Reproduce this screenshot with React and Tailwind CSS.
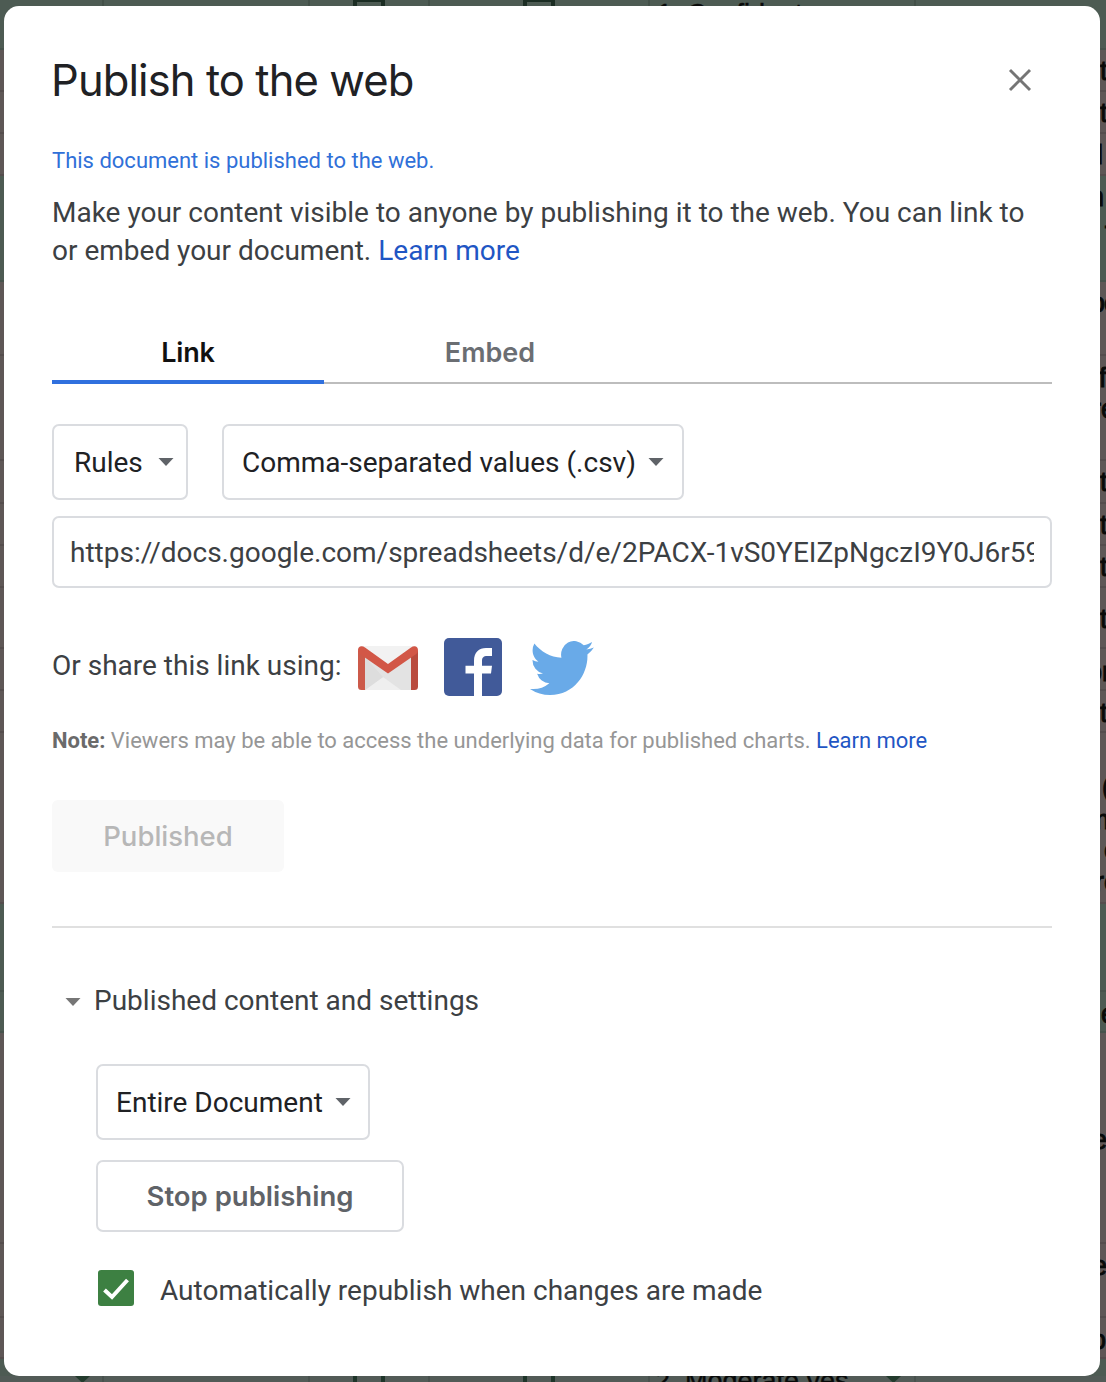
import React from "react";

const rows = [
  { h: 50, green: true },
  { h: 42, words: [["t", 30, 0]] },
  { h: 42, words: [["t", 30, 0]] },
  { h: 42, words: [["l", 30, -3]] },
  { h: 106, green: true, words: [["n", 30, -11], ["-", 58, 4]] },
  { h: 74, words: [["o", 30, -10], ["c", 30, 4]] },
  { h: 105, words: [["f", 31, -1], ["re", 62, -8]] },
  { h: 43, words: [["t", 30, 0]] },
  { h: 42, words: [["t", 30, 0]] },
  { h: 42, words: [["t", 30, 0]] },
  { h: 61, words: [["t", 40, 0]] },
  { h: 42, words: [["or", 32, -13]] },
  { h: 42, words: [["t", 31, 0]] },
  { h: 171, words: [["(", 63, 2], ["m", 96, -13], ["c", 126, 4], ["re", 158, -5]] },
  { h: 88, green: true },
  { h: 41, green: true, words: [["e", 31, 1]] },
  { h: 211, words: [["e", 116, -8]] },
  { h: 74, words: [["e", 31, -8]] },
  { h: 41, words: [["o", 31, -9]] },
  { h: 24, green: true },
];

function Backdrop() {
  return (
    <div className="absolute inset-0 flex flex-col overflow-hidden font-['Liberation_Sans',sans-serif] text-[27px] text-[#080a09]" aria-hidden="true">
      {rows.map((r, i) => (
        <div
          key={i}
          className={
            "flex shrink-0 justify-end border-b-2 " +
            (r.green ? "border-[#46534c] bg-[#4d5b53]" : "border-[#544d4d] bg-[#5e5756]")
          }
          style={{ height: r.h }}
        >
          <div className="relative w-1.5 overflow-hidden">
            {(r.words || []).map(([w, base, x], j) => (
              <span key={j} className="absolute leading-[30px] [-webkit-text-stroke:0.9px]" style={{ top: base - 24, left: x }}>
                {w}
              </span>
            ))}
          </div>
        </div>
      ))}
      <div className="absolute left-0 top-0 h-1.5 w-full overflow-hidden">
        <i className="absolute left-[102px] h-full w-0.5 bg-[#435048]" />
        <i className="absolute left-[308px] h-full w-0.5 bg-[#435048]" />
        <i className="absolute left-[353px] h-5 w-8 border-4 border-t-2 border-[#1b2d23]" />
        <i className="absolute left-[428px] h-full w-0.5 bg-[#435048]" />
        <i className="absolute left-[523px] h-5 w-8 border-4 border-t-2 border-[#1b2d23]" />
        <i className="absolute left-[648px] h-full w-0.5 bg-[#435048]" />
        <span className="absolute left-[657px] top-0 whitespace-pre leading-[28px] [-webkit-text-stroke:0.5px]">1. Confident</span>
        <i className="absolute left-[914px] h-full w-0.5 bg-[#435048]" />
      </div>
      <div className="absolute left-0 top-[1376px] h-1.5 w-full overflow-hidden bg-[#525b57]">
        <svg className="absolute left-[75px] top-0" width="15" height="6"><path d="M0 0h15L7.500 7z" fill="#233b2d" /></svg>
        <i className="absolute left-[102px] h-full w-0.5 bg-[#48514d]" />
        <i className="absolute left-[308px] h-full w-0.5 bg-[#48514d]" />
        <i className="absolute left-[353px] top-[-4px] h-5 w-8 border-4 border-[#1f3529]" />
        <i className="absolute left-[428px] h-full w-0.5 bg-[#48514d]" />
        <i className="absolute left-[523px] top-[-4px] h-5 w-8 border-4 border-[#1f3529]" />
        <i className="absolute left-[648px] h-full w-0.5 bg-[#48514d]" />
        <span className="absolute left-[655px] top-[-9px] whitespace-pre leading-[28px] [-webkit-text-stroke:0.4px]">2. Moderate yes</span>
        <svg className="absolute left-[886px] top-0" width="15" height="6"><path d="M0 0h15L7.500 7z" fill="#233b2d" /></svg>
        <i className="absolute left-[914px] h-full w-0.5 bg-[#48514d]" />
      </div>
    </div>
  );
}

function Caret({ color = "#5f6368" }) {
  return (
    <svg width="16" height="8" viewBox="0 0 16 8" className="shrink-0">
      <path d="M.5 0h15L8 8z" fill={color} />
    </svg>
  );
}

function Select({ children, className }) {
  return (
    <button className={"flex h-[76px] items-center rounded-[7px] border-2 border-[#dadce0] text-[#202124] " + className}>
      <span className="whitespace-nowrap pt-0.5">{children}</span>
      <Caret />
    </button>
  );
}

function Gmail() {
  return (
    <svg width="62" height="46" viewBox="0 0 62 46">
      <rect x="1" y="1" width="60" height="44" rx="3.5" fill="#f2f2f2" />
      <path d="M8 12l23 16 23-16v33H8z" fill="#e3e3e3" />
      <path d="M8 45l18-13 18 13z" fill="#efefef" />
      <path d="M8 12l18 20L8 45z" fill="#dddddd" />
      <path d="M1 5l7 7v33H4.500a3.500 3.500 0 0 1-3.500-3.500z" fill="#cc5a4a" />
      <path d="M61 5l-7 7v33h3.500a3.500 3.500 0 0 0 3.500-3.500z" fill="#b94b3e" />
      <path d="M1 5C1 1 5 0 8 2.500L31 19 54 2.500C57 0 61 1 61 5c0 2-1 3.500-2.500 4.500L31 28.500 3.500 9.500C2 8.500 1 7 1 5z" fill="#d25747" />
    </svg>
  );
}

function Facebook() {
  return (
    <svg width="60" height="60" viewBox="0 0 60 60">
      <rect x="1" y="1" width="58" height="58" rx="5" fill="#415a99" />
      <path d="M31 59V36.500h-8.500v-7.800H31V24c0-9 5-13 12-13h6v8h-4.500c-4.500 0-5.500 2-5.500 5v4.700h10L48 36.500h-9V59z" fill="#fff" />
    </svg>
  );
}

function Twitter() {
  return (
    <svg width="64" height="54" viewBox="0 0 24 19.5" preserveAspectRatio="none">
      <path fill="#69aae8" d="M23.950 2.310a10 10 0 0 1-2.820.780 4.960 4.960 0 0 0 2.160-2.720c-.950.550-2 .960-3.130 1.180a4.920 4.920 0 0 0-8.380 4.480C7.690 5.840 4.070 3.870 1.640.900A4.900 4.900 0 0 0 .970 3.380c0 1.710.870 3.210 2.190 4.100a4.900 4.900 0 0 1-2.230-.620v.060a4.920 4.920 0 0 0 3.950 4.830 5 5 0 0 1-2.210.080 4.940 4.940 0 0 0 4.600 3.420A9.870 9.870 0 0 1 0 17.290a14 14 0 0 0 7.550 2.210c9.050 0 14-7.500 14-13.980 0-.210 0-.420-.020-.630a9.900 9.900 0 0 0 2.420-2.580z" />
    </svg>
  );
}

export default function App() {
  return (
    <div className="relative h-[1382px] w-[1106px] overflow-hidden bg-[#4d5b53] pl-1 pt-1.5 font-[Roboto,sans-serif] text-[28px] leading-[38px] text-[#3c4043]">
      <Backdrop />
      <main className="relative flex h-[1370px] w-[1096px] flex-col rounded-[15px] bg-white px-12">
        <header className="flex h-[132px] items-start justify-between pt-[46px]">
          <h1 className="-ml-px whitespace-nowrap font-[Inter,sans-serif] text-[43.5px] leading-[56px] tracking-[-0.9px] text-[#202124]">Publish to the web</h1>
          <button className="mr-[20px] mt-[16px]" aria-label="Close">
            <svg width="24" height="24" viewBox="0 0 24 24" fill="none" stroke="#757575" strokeWidth="2.900"><path d="M2 2l20 20M22 2L2 22" /></svg>
          </button>
        </header>
        <p className="h-[56px] pt-1 text-[22px] leading-[38px] text-[#3070d8]">This document is published to the web.</p>
        <p className="h-[76px] whitespace-nowrap">
          Make your content visible to anyone by publishing it to the web. You can link to<br />
          or embed your document. <a className="text-[#1f56c4]">Learn more</a>
        </p>
        <nav className="mt-[44px] flex h-[70px] shrink-0 border-b-2 border-[#bdbdbd] pt-[13px] text-center font-[Inter,sans-serif] text-[27px] font-semibold">
          <div className="h-[57px] w-[272px] border-b-4 border-[#3070de] leading-[51px] tracking-[-0.2px] text-[#111]">Link</div>
          <div className="ml-[30px] h-[57px] w-[272px] leading-[51px] text-[#6b6e73]">Embed</div>
        </nav>
        <div className="mt-[40px] flex">
          <Select className="w-[136px] justify-between pl-[20px] pr-[12px]">Rules</Select>
          <Select className="ml-[34px] w-[462px] justify-between pl-[18px] pr-[18px]">Comma-separated values (.csv)</Select>
        </div>
        <div className="mt-4 h-[72px] shrink-0 rounded-[7px] border-2 border-[#dadce0] px-4">
          <div className="overflow-hidden whitespace-nowrap pt-px leading-[68px]">https://docs.google.com/spreadsheets/d/e/2PACX-1vS0YEIZpNgczI9Y0J6r59</div>
        </div>
        <div className="mt-[48px] flex h-[64px] items-center">
          <span className="w-[305px] whitespace-nowrap pb-1">Or share this link using:</span>
          <Gmail />
          <div className="ml-6 -mt-0.5"><Facebook /></div>
          <div className="ml-[27px]"><Twitter /></div>
        </div>
        <p className="mt-[22px] text-[22px] tracking-[-0.01px] text-[#969696]"><b className="text-[#6a6a6a]">Note:</b> Viewers may be able to access the underlying data for published charts. <a className="text-[#1f56c4]">Learn more</a></p>
        <button className="mt-10 h-[72px] w-[232px] rounded-[6px] bg-[#f9f9f9] pb-px font-[Inter,sans-serif] text-[27.5px] font-medium text-[#b7b7b7]">Published</button>
        <div className="mt-[54px] h-0.5 bg-[#e0e0e0]" />
        <div className="mt-[54px] flex items-center pl-[13px]">
          <div className="pt-0.5"><Caret color="#767676" /></div>
          <span className="ml-[13px]">Published content and settings</span>
        </div>
        <div className="mt-[44px] flex flex-col pl-11">
          <Select className="w-[274px] justify-between pl-[18px] pr-[17px]">Entire Document</Select>
          <button className="mt-5 h-[72px] w-[308px] rounded-[7px] border-2 border-[#dadce0] pb-px font-[Inter,sans-serif] text-[27.5px] font-semibold text-[#5f6368]">Stop publishing</button>
          <label className="mt-[38px] flex h-[38px] items-start pl-0.5">
            <svg width="36" height="36" viewBox="0 0 36 36"><rect width="36" height="36" rx="3" fill="#3d8042" /><path d="M6.500 20l7.500 7L29.500 10" fill="none" stroke="#fff" strokeWidth="4" /></svg>
            <span className="ml-[26px] mt-[2px] whitespace-nowrap">Automatically republish when changes are made</span>
          </label>
        </div>
      </main>
    </div>
  );
}
